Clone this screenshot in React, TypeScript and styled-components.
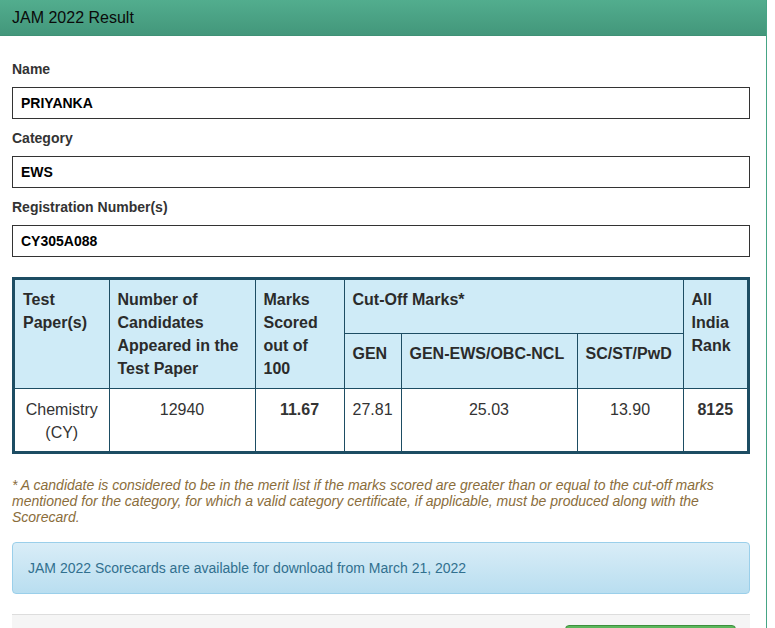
import React from "react";
import styled, { createGlobalStyle } from "styled-components";

const Global = createGlobalStyle`
  html, body { margin: 0; padding: 0; background: #fff; }
  body { font-family: "Liberation Sans", Arial, Helvetica, sans-serif; color: #333; }
  * { box-sizing: border-box; }
`;

const Panel = styled.div`
  width: 767px;
  border-right: 1px solid #46a585;
  min-height: 700px;
`;

const Heading = styled.div`
  height: 36px;
  padding: 9px 12px;
  background: linear-gradient(to bottom, #52ad8e 0%, #43977b 100%);
  border-bottom: 1px solid #3f9176;
  font-size: 16px;
  line-height: 18px;
  color: #0a0a0a;
`;

const Body = styled.div`
  padding: 23px 16px 0 12px;
`;

const Label = styled.div`
  font-size: 14px;
  font-weight: 700;
  line-height: 20px;
  color: #333;
  margin-bottom: 8px;
`;

const Field = styled.div`
  height: 32px;
  border: 1px solid #333;
  padding: 0 8px;
  font-size: 14px;
  font-weight: 700;
  line-height: 30px;
  color: #000;
  margin-bottom: 9px;
`;

const TableFrame = styled.div`
  margin-top: 20px;
  border: 3px solid #1d4d63;
`;

const Table = styled.table`
  width: 100%;
  border-collapse: collapse;
  border-style: hidden;
  table-layout: fixed;
  font-size: 16px;
  line-height: 23px;
`;

const Th = styled.th<{ $h?: number }>`
  background: #cfebf7;
  border: 1px solid #1d4d63;
  padding: 8px;
  text-align: left;
  vertical-align: top;
  font-weight: 700;
  color: #2b2b2b;
  ${(p) => (p.$h ? `height: ${p.$h}px;` : "")}
`;

const Td = styled.td<{ $bold?: boolean }>`
  border: 1px solid #1d4d63;
  padding: 9px 8px 7px;
  text-align: center;
  vertical-align: top;
  font-weight: ${(p) => (p.$bold ? 700 : 400)};
  color: #333;
  height: 62px;
`;

const Note = styled.p`
  margin: 23px 0 0;
  font-size: 14px;
  line-height: 16px;
  font-style: italic;
  color: #8a6d3b;
`;

const Alert = styled.div`
  margin-top: 17px;
  padding: 15px;
  border: 1px solid #9acfea;
  border-radius: 4px;
  background: linear-gradient(to bottom, #d9edf7 0%, #b9def0 100%);
  color: #31708f;
  font-size: 14px;
  line-height: 20px;
`;

const Footer = styled.div`
  margin-top: 20px;
  padding: 10px 14px 10px 15px;
  background: #f5f5f5;
  border-top: 1px solid #ddd;
  display: flex;
  justify-content: flex-end;
`;

const Button = styled.button`
  width: 171px;
  height: 34px;
  border: 1px solid #3e8f3e;
  border-radius: 4px;
  background: linear-gradient(to bottom, #5cb85c 0%, #419641 100%);
  color: #fff;
  font-family: inherit;
  font-size: 14px;
`;

const fields = [
  { label: "Name", value: "PRIYANKA" },
  { label: "Category", value: "EWS" },
  { label: "Registration Number(s)", value: "CY305A088" },
];

export default function App() {
  return (
    <>
      <Global />
      <Panel>
        <Heading>JAM 2022 Result</Heading>
        <Body>
          {fields.map((f) => (
            <React.Fragment key={f.label}>
              <Label>{f.label}</Label>
              <Field>{f.value}</Field>
            </React.Fragment>
          ))}
          <TableFrame>
            <Table>
              <colgroup>
                <col style={{ width: 94 }} />
                <col style={{ width: 146 }} />
                <col style={{ width: 89 }} />
                <col style={{ width: 57 }} />
                <col style={{ width: 176 }} />
                <col style={{ width: 106 }} />
                <col />
              </colgroup>
              <thead>
                <tr>
                  <Th rowSpan={2}>Test Paper(s)</Th>
                  <Th rowSpan={2}>Number of Candidates Appeared in the Test Paper</Th>
                  <Th rowSpan={2}>Marks Scored out of 100</Th>
                  <Th colSpan={3} $h={53}>Cut-Off Marks*</Th>
                  <Th rowSpan={2}>All India Rank</Th>
                </tr>
                <tr>
                  <Th $h={54}>GEN</Th>
                  <Th>GEN-EWS/OBC-NCL</Th>
                  <Th>SC/ST/PwD</Th>
                </tr>
              </thead>
              <tbody>
                <tr>
                  <Td>Chemistry (CY)</Td>
                  <Td>12940</Td>
                  <Td $bold>11.67</Td>
                  <Td>27.81</Td>
                  <Td>25.03</Td>
                  <Td>13.90</Td>
                  <Td $bold>8125</Td>
                </tr>
              </tbody>
            </Table>
          </TableFrame>
          <Note>
            * A candidate is considered to be in the merit list if the marks scored are greater than or equal to the cut-off marks
            mentioned for the category, for which a valid category certificate, if applicable, must be produced along with the
            Scorecard.
          </Note>
          <Alert>JAM 2022 Scorecards are available for download from March 21, 2022</Alert>
          <Footer>
            <Button aria-label="Download Scorecard" />
          </Footer>
        </Body>
      </Panel>
    </>
  );
}
